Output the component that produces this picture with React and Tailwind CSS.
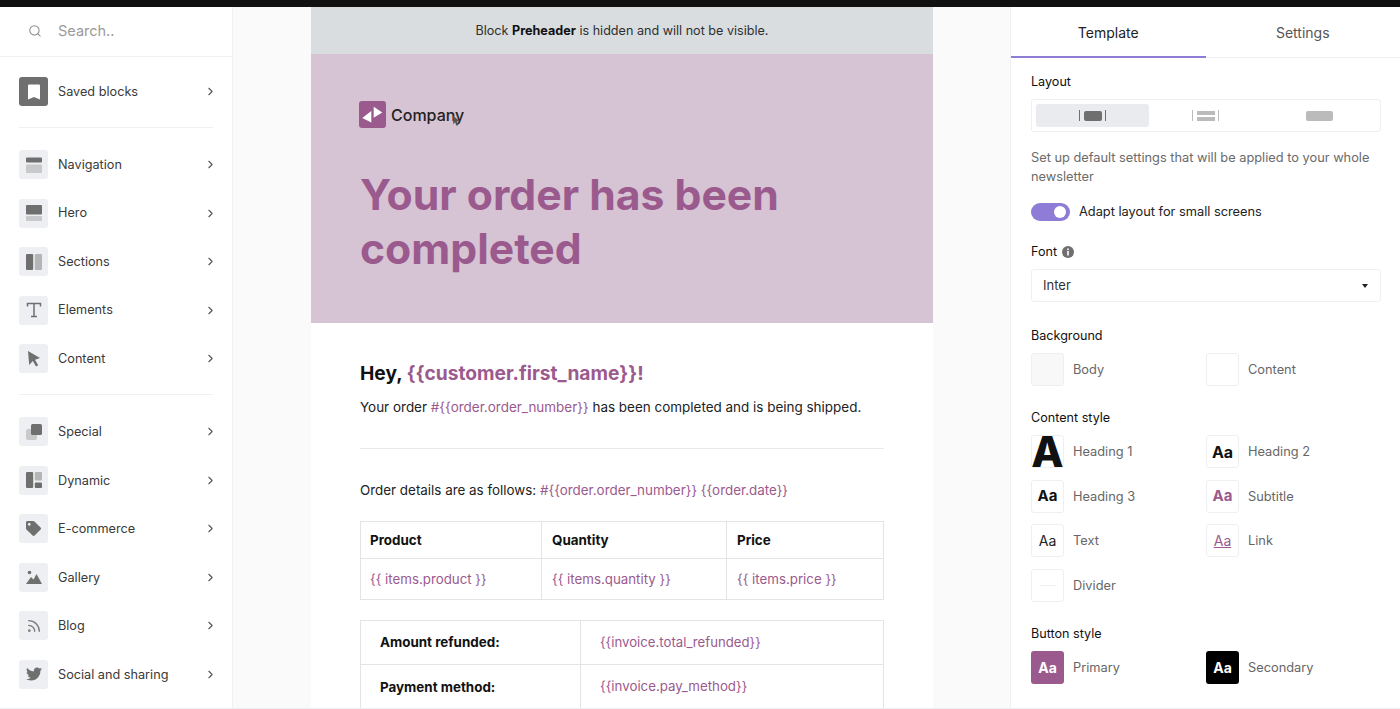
import { FaTwitter, FaTag } from 'react-icons/fa'
import { ChevronRight, Search, Rss } from 'lucide-react'

const G1 = '#6f6f6f'
const G2 = '#c9c9cb'

const Svg = ({ children }) => (
  <svg viewBox="0 0 16 16" className="w-4 h-4">{children}</svg>
)

const icons = {
  bookmark: (
    <svg viewBox="0 0 16 16" className="w-4 h-4">
      <path d="M2 1.5a1 1 0 011-1h10a1 1 0 011 1v14L8 13l-6 2.5z" fill="#fff" />
    </svg>
  ),
  nav: (
    <Svg>
      <rect y="0.5" width="16" height="5" rx="1" fill={G1} />
      <rect y="7.5" width="16" height="8.5" rx="1" fill={G2} />
    </Svg>
  ),
  hero: (
    <Svg>
      <rect y="0" width="16" height="9.5" rx="1" fill={G1} />
      <rect y="11" width="16" height="5" rx="1" fill={G2} />
    </Svg>
  ),
  sections: (
    <Svg>
      <rect width="7.2" height="16" rx="1" fill={G1} />
      <rect x="8.8" width="7.2" height="16" rx="1" fill="#b5b5b7" />
    </Svg>
  ),
  text: (
    <Svg>
      <path d="M1.5 4.5V1.5h13v3M8 1.5v13M5 14.5h6" fill="none" stroke={G1} strokeWidth="1.5" />
    </Svg>
  ),
  cursor: (
    <Svg>
      <path d="M2 0l12 7-5 1.8 3.2 5.4-2.2 1.4-3.2-5.5L3.2 14z" fill={G1} />
    </Svg>
  ),
  special: (
    <Svg>
      <rect x="0" y="5" width="11" height="11" rx="2" fill={G2} />
      <rect x="5" y="0" width="11" height="11" rx="1.5" fill={G1} />
    </Svg>
  ),
  dynamic: (
    <Svg>
      <rect width="7.2" height="16" rx="1" fill={G1} />
      <rect x="8.8" width="7.2" height="8.5" rx="1" fill="#b5b5b7" />
      <rect x="8.8" y="10.5" width="7.2" height="5.5" rx="1" fill={G1} />
    </Svg>
  ),
  tag: <FaTag className="w-[15px] h-[15px] text-[#6f6f6f]" />,
  gallery: (
    <Svg>
      <circle cx="3.5" cy="3.5" r="1.8" fill={G1} />
      <path d="M0 15l5-7 2.5 2.5L10.5 5 16 15z" fill={G1} />
    </Svg>
  ),
  rss: <Rss className="w-[16px] h-[16px] text-[#7d7d7d]" strokeWidth={2} />,
  twitter: <FaTwitter className="w-4 h-4 text-[#6f6f6f]" />,
}

const savedRow = { label: 'Saved blocks', icon: 'bookmark', dark: true }
const group1 = [
  { label: 'Navigation', icon: 'nav' },
  { label: 'Hero', icon: 'hero' },
  { label: 'Sections', icon: 'sections' },
  { label: 'Elements', icon: 'text' },
  { label: 'Content', icon: 'cursor' },
]
const group2 = [
  { label: 'Special', icon: 'special' },
  { label: 'Dynamic', icon: 'dynamic' },
  { label: 'E-commerce', icon: 'tag' },
  { label: 'Gallery', icon: 'gallery' },
  { label: 'Blog', icon: 'rss' },
  { label: 'Social and sharing', icon: 'twitter' },
]

const SideRow = ({ label, icon, dark }) => (
  <div className="flex items-center h-[29px]">
    <div className={`w-[29px] h-[29px] rounded-[3px] flex items-center justify-center ${dark ? 'bg-[#6f6f6f]' : 'bg-[#eeeff2]'}`}>
      {icons[icon]}
    </div>
    <span className="ml-[10px] text-[12.7px] text-[#3a3a3a] flex-1">{label}</span>
    <ChevronRight className="w-[13px] h-[13px] text-[#555] mr-[-4px]" strokeWidth={2} />
  </div>
)

const Sidebar = () => (
  <aside className="w-[233px] shrink-0 bg-white border-r border-[#f0f0f2] flex flex-col">
    <div className="h-[50px] border-b border-[#f0f0f2] flex items-center pl-[28px] pb-[1px]">
      <Search className="w-[14px] h-[14px] text-[#8a8a8a]" strokeWidth={1.75} />
      <span className="ml-[16px] text-[14.5px] text-[#9a9a9a]">Search..</span>
    </div>
    <div className="px-[19px] pt-[20px]">
      <SideRow {...savedRow} />
    </div>
    <div className="mx-[19px] mt-[21px] border-t border-[#f0f0f2]" />
    <div className="px-[19px] pt-[22px] flex flex-col gap-[19.5px]">
      {group1.map(r => <SideRow key={r.label} {...r} />)}
    </div>
    <div className="mx-[19px] mt-[21px] border-t border-[#f0f0f2]" />
    <div className="px-[19px] pt-[22px] flex flex-col gap-[19.6px]">
      {group2.map(r => <SideRow key={r.label} {...r} />)}
    </div>
  </aside>
)

const Email = () => (
  <div className="w-[622px] bg-white">
    <div className="h-[47px] pt-[1px] bg-[#d9dde0] flex items-center justify-center text-[12.6px] text-[#2f2f2f]">
      <span>Block <b className="font-bold text-[#111]">Preheader</b> is hidden and will not be visible.</span>
    </div>
    <div className="h-[269px] bg-[#d6c3d3] px-[49px] pt-[47px] relative">
      <div className="flex items-center h-[27px] ml-[-1px]">
        <svg viewBox="0 0 27 27" className="w-[27px] h-[27px]">
          <rect width="27" height="27" rx="3" fill="#9b5a8e" />
          <path d="M12.3 10v11.6L3.3 17zM14.7 5.7v11L23.3 11.5z" fill="#fff" />
        </svg>
        <span className="ml-[5px] text-[16px] font-medium text-[#222]">Company</span>
      </div>
      <svg viewBox="0 0 10 12" className="w-[9px] h-[10px] absolute left-[141px] top-[62px]">
        <path d="M1 0l8 6-3.5.6L7 11l-2 .8-1.6-4.2L1 10z" fill="#555" />
      </svg>
      <h1 className="mt-[40px] text-[42.7px] leading-[54px] font-bold text-[#9b5a8e]">
        Your order has been
        <br />
        completed
      </h1>
    </div>
    <div className="px-[49px] text-[13.4px] text-[#222]">
      <div className="pt-[36px] text-[19.2px] leading-[28px] font-bold text-[#111]">
        Hey, <span className="text-[#9b5a8e]">{'{{customer.first_name}}!'}</span>
      </div>
      <div className="mt-[8px] leading-[24px] text-[13.46px]">
        Your order <span className="text-[#9b5a8e]">{'#{{order.order_number}}'}</span> has been completed and is being shipped.
      </div>
      <div className="mt-[29px] border-t border-[#e9e9eb]" />
      <div className="mt-[29px] leading-[24px]">
        Order details are as follows: <span className="text-[#9b5a8e]">{'#{{order.order_number}} {{order.date}}'}</span>
      </div>
      <div className="mt-[19px] border border-[#e4e4e6]">
        <div className="grid grid-cols-[180px_185px_1fr] h-[37px] border-b border-[#e4e4e6] font-bold text-[#111]">
          <div className="flex items-center pl-[9px]">Product</div>
          <div className="flex items-center pl-[10px] border-l border-[#e4e4e6]">Quantity</div>
          <div className="flex items-center pl-[10px] border-l border-[#e4e4e6]">Price</div>
        </div>
        <div className="grid grid-cols-[180px_185px_1fr] h-[40px] text-[13.3px] text-[#9b5a8e]">
          <div className="flex items-center pl-[9px] pt-[1px]">{'{{ items.product }}'}</div>
          <div className="flex items-center pl-[10px] pt-[1px] border-l border-[#e4e4e6]">{'{{ items.quantity }}'}</div>
          <div className="flex items-center pl-[10px] pt-[1px] border-l border-[#e4e4e6]">{'{{ items.price }}'}</div>
        </div>
      </div>
      <div className="mt-[20px] border border-[#e4e4e6] border-b-0">
        <div className="grid grid-cols-[219px_1fr] h-[44px] border-b border-[#e4e4e6]">
          <div className="flex items-center pl-[19px] font-bold text-[#111]">Amount refunded:</div>
          <div className="flex items-center pl-[19px] border-l border-[#e4e4e6] text-[13.2px] text-[#9b5a8e]">{'{{invoice.total_refunded}}'}</div>
        </div>
        <div className="grid grid-cols-[219px_1fr] h-[44px]">
          <div className="flex items-center pl-[19px] font-bold text-[#111]">Payment method:</div>
          <div className="flex items-center pl-[19px] border-l border-[#e4e4e6] text-[13.3px] text-[#9b5a8e]">{'{{invoice.pay_method}}'}</div>
        </div>
      </div>
    </div>
  </div>
)

const Swatch = ({ label, children, className = 'border border-[#eeeff2] bg-white' }) => (
  <div className="flex items-center h-[33px]">
    <div className={`w-[33px] h-[33px] rounded-[3px] flex items-center justify-center ${className}`}>
      {children}
    </div>
    <span className="ml-[9px] text-[12.8px] text-[#666]">{label}</span>
  </div>
)

const SectionTitle = ({ children, className = '' }) => (
  <div className={`text-[12.6px] leading-[16px] text-[#111] ${className}`}>{children}</div>
)

const Panel = () => (
  <aside className="w-[390px] shrink-0 bg-white border-l border-[#f0f0f2]">
    <div className="grid grid-cols-2 h-[51px] border-b border-[#f0f0f2] text-[14px]">
      <div className="flex items-center justify-center pt-[1px] text-[#222] border-b-2 border-[#8e7cd6] h-[51px]">Template</div>
      <div className="flex items-center justify-center text-[#555]">Settings</div>
    </div>
    <div className="pl-[20px] pr-[19px] pt-[16px]">
      <SectionTitle>Layout</SectionTitle>
      <div className="mt-[9px] h-[33px] border border-[#eeeff2] rounded-[3px] p-[4px] grid grid-cols-3">
        <div className="bg-[#eaebee] rounded-[3px] flex items-center justify-center gap-[1.5px]">
          <span className="w-px h-[11px] bg-[#6f6f6f]" />
          <span className="w-[18px] h-[10px] bg-[#6f6f6f] rounded-[2px] mx-[2px]" />
          <span className="w-px h-[11px] bg-[#6f6f6f]" />
        </div>
        <div className="flex items-center justify-center gap-[1.5px]">
          <span className="w-px h-[11px] bg-[#bbb]" />
          <span className="w-[18px] mx-[2px] flex flex-col gap-[2px]">
            <span className="block h-[4px] bg-[#bbb]" />
            <span className="block h-[4px] bg-[#bbb]" />
          </span>
          <span className="w-px h-[11px] bg-[#bbb]" />
        </div>
        <div className="flex items-center justify-center">
          <span className="w-[27px] h-[10px] bg-[#bbb] rounded-[2px]" />
        </div>
      </div>
      <p className="mt-[16px] mr-[-12px] text-[12.8px] leading-[19px] text-[#6a6a6a]">
        Set up default settings that will be applied to your whole newsletter
      </p>
      <div className="mt-[17px] flex items-center h-[18px]">
        <div className="w-[39px] h-[18px] rounded-full bg-[#8e7cd6] flex items-center justify-end pr-[4px]">
          <span className="w-[12px] h-[12px] rounded-full bg-white" />
        </div>
        <span className="ml-[9px] text-[12.8px] text-[#222]">Adapt layout for small screens</span>
      </div>

      <div className="mt-[23px] flex items-center gap-[5px]">
        <SectionTitle>Font</SectionTitle>
        <svg viewBox="0 0 12 12" className="w-[12px] h-[12px]">
          <circle cx="6" cy="6" r="6" fill="#6f6f6f" />
          <rect x="5.2" y="5" width="1.6" height="4.5" fill="#fff" />
          <rect x="5.2" y="2.5" width="1.6" height="1.6" fill="#fff" />
        </svg>
      </div>
      <div className="mt-[9px] h-[33px] pt-[1px] border border-[#eeeff2] rounded-[3px] flex items-center justify-between pl-[11px] pr-[12px] text-[13px] text-[#333]">
        <span>Inter</span>
        <span className="w-0 h-0 border-x-[3.5px] border-x-transparent border-t-[4px] border-t-[#222]" />
      </div>

      <SectionTitle className="mt-[26px]">Background</SectionTitle>
      <div className="mt-[9px] grid grid-cols-[175px_1fr]">
        <Swatch label="Body" className="border border-[#eeeff2] bg-[#f8f8f9]" />
        <Swatch label="Content" />
      </div>

      <SectionTitle className="mt-[24px]">Content style</SectionTitle>
      <div className="mt-[9px] grid grid-cols-[175px_1fr] gap-y-[11.7px]">
        <Swatch label="Heading 1">
          <span className="text-[42px] leading-[33px] font-extrabold text-[#111]">A</span>
        </Swatch>
        <Swatch label="Heading 2">
          <span className="text-[16px] font-bold text-[#111]">Aa</span>
        </Swatch>
        <Swatch label="Heading 3">
          <span className="text-[15px] font-bold text-[#111]">Aa</span>
        </Swatch>
        <Swatch label="Subtitle">
          <span className="text-[15px] font-bold text-[#9b5a8e]">Aa</span>
        </Swatch>
        <Swatch label="Text">
          <span className="text-[14px] text-[#222]">Aa</span>
        </Swatch>
        <Swatch label="Link">
          <span className="text-[14px] text-[#9b5a8e] underline">Aa</span>
        </Swatch>
        <Swatch label="Divider">
          <span className="w-[16px] border-t border-[#eeeff2]" />
        </Swatch>
      </div>

      <SectionTitle className="mt-[24px]">Button style</SectionTitle>
      <div className="mt-[9px] grid grid-cols-[175px_1fr]">
        <Swatch label="Primary" className="bg-[#9b5a8e]">
          <span className="text-[14px] font-bold text-white">Aa</span>
        </Swatch>
        <Swatch label="Secondary" className="bg-black">
          <span className="text-[14px] font-bold text-white">Aa</span>
        </Swatch>
      </div>
    </div>
  </aside>
)

const App = () => (
  <div className="h-screen overflow-hidden flex flex-col bg-white font-['Inter',sans-serif]">
    <div className="h-[7px] shrink-0 bg-[#111]" />
    <div className="flex-1 min-h-0 flex overflow-hidden border-b border-[#eeeff2]">
      <Sidebar />
      <main className="flex-1 bg-[#fafafa] flex pl-[78px] overflow-hidden">
        <Email />
      </main>
      <Panel />
    </div>
  </div>
)

export default App
